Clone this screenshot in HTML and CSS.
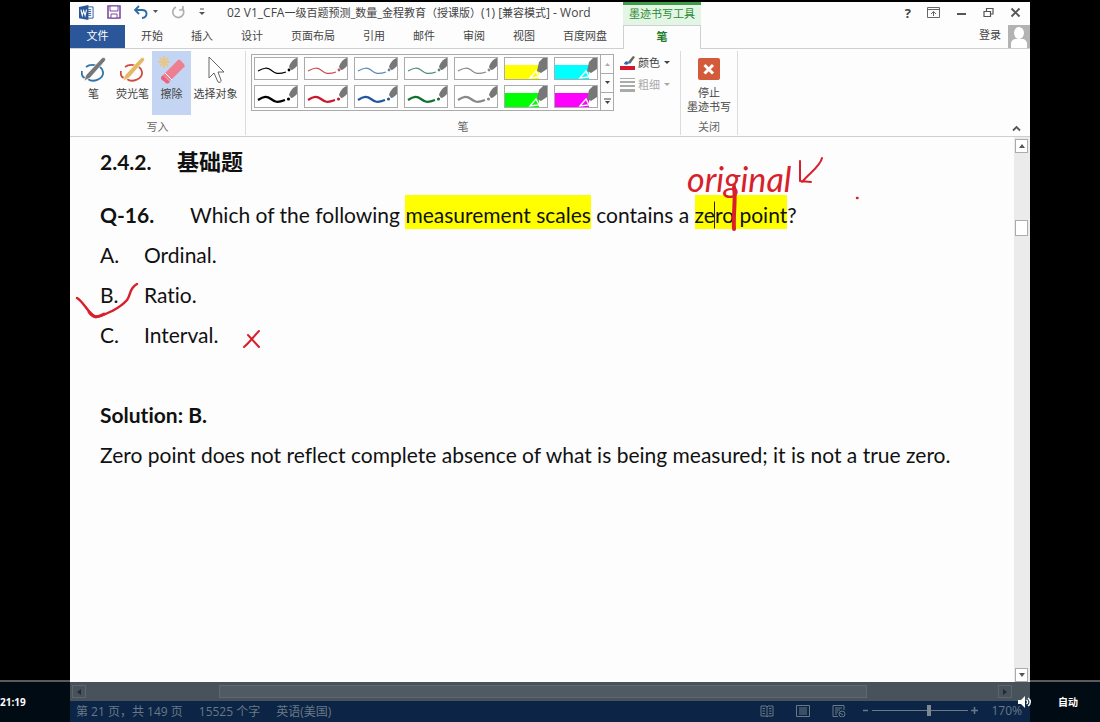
FILE: index.html
```
<!DOCTYPE html>
<html lang="zh-CN">
<head>
  <meta charset="UTF-8">
  <meta name="viewport" content="width=device-width, initial-scale=1.0">
  <title>02 V1_CFA一级百题预测 - Word</title>
  <link rel="stylesheet" href="styles.css">
</head>
<body>
  <!-- shared icons -->
  <svg class="defs" aria-hidden="true">
    <symbol id="stroke-thin" viewBox="0 0 42 21">
      <path d="M3 13C9 10 12 9 16 12S22 17 31 14" fill="none" stroke="currentColor" stroke-width="1.2"/>
      <circle cx="34" cy="12" r="1.4" fill="currentColor"/>
      <path d="M36 12L34 9C35 5 38 1 42 0V8C40 10 38 12 36 12Z" fill="#777"/>
    </symbol>
    <symbol id="stroke-thick" viewBox="0 0 42 21">
      <path d="M3 14C9 10 12 10 16 13S22 17 30 14" fill="none" stroke="currentColor" stroke-width="2.2"/>
      <circle cx="33.500" cy="13" r="1.6" fill="currentColor"/>
      <path d="M36 12L34 9C35 5 38 1 42 0V8C40 10 38 12 36 12Z" fill="#777"/>
    </symbol>
    <symbol id="marker" viewBox="0 0 42 21">
      <path d="M0 7H34V21H0Z" fill="currentColor"/>
      <path d="M25 20L31 13L34 19Z" fill="none" stroke="#fff" stroke-width="1.3"/>
      <path d="M32 13L34 4L38 0H42V11L36 15Z" fill="#777"/>
    </symbol>
    <symbol id="pen" viewBox="0 0 26 28">
      <path d="M5 11C10 7 21 9 22 16C23 23 12 27 7 23M1 15C0 20 3 23 5 21" fill="none" stroke="var(--ring)" stroke-width="1.8"/>
      <path d="M3 25L5 19L20 3C22 0 26 2 24 5L9 22Z" fill="var(--body)" stroke="#fff" stroke-width=".7"/>
    </symbol>
  </svg>

  <div class="player">
    <div class="side"></div>

    <div class="word">
      <header class="titlebar">
        <div class="title-left">
          <svg class="logo" viewBox="0 0 16 16"><path d="M8 2H15V14H8" fill="#fff" stroke="#2b579a"/><path d="M9 5H13M9 7H13M9 9H13M9 11H13" stroke="#2b579a"/><path d="M0 2L10 0V16L0 14Z" fill="#2b579a"/><path d="M2 5L3.500 11L5 6L6.500 11L8 5" fill="none" stroke="#fff" stroke-width="1.200"/></svg>
          <button class="quick" aria-label="保存"><svg width="14" height="14" viewBox="0 0 14 14"><path d="M1 1H13V13H1Z" fill="none" stroke="#7d4ba0" stroke-width="1.600"/><path d="M3 1H11V6H3ZM4 9H10V13H4Z" fill="#fff" stroke="#7d4ba0"/></svg></button>
          <button class="quick undo" aria-label="撤消"><svg width="24" height="14" viewBox="0 0 24 14"><path d="M5 1L1 5L5 9M1 5H8C14 5 14 12 8 13" fill="none" stroke="#2e6aa8" stroke-width="1.900"/><path d="M19 5H24L21.500 8Z" fill="#555"/></svg></button>
          <button class="quick" aria-label="重复"><svg width="14" height="14" viewBox="0 0 14 14"><path d="M5 2A5.500 5.500 0 1 0 11 3M8 5H12V1" fill="none" stroke="#b0b0b0" stroke-width="1.700"/></svg></button>
          <button class="quick" aria-label="自定义"><svg width="8" height="8" viewBox="0 0 8 8"><path d="M2 1H6" stroke="#555"/><path d="M1 4H7L4 7Z" fill="#555"/></svg></button>
          <span class="doc-name"><span class="latin">02 V1_CFA</span>一级百题预测_数量_金程教育（授课版）<span class="latin">(1) [</span>兼容模式<span class="latin">] - Word</span></span>
        </div>
        <div class="context-name">墨迹书写工具</div>
        <div class="window-buttons">
          <button aria-label="帮助">?</button>
          <button aria-label="功能区显示选项"><svg width="13" height="11" viewBox="0 0 13 11"><path d="M.5 .5H12.500V10.500H.5ZM.5 2.500H12.500M6.500 9V4.500M4 7L6.500 4.500L9 7" fill="none" stroke="#666"/></svg></button>
          <button aria-label="最小化"><svg width="11" height="11" viewBox="0 0 11 11"><path d="M1 7H10" stroke="#555" stroke-width="2"/></svg></button>
          <button aria-label="还原"><svg width="11" height="11" viewBox="0 0 11 11"><path d="M1 4.500H7.500V9.500H1ZM3.500 4V1.500H10V7H8" fill="none" stroke="#555" stroke-width="1.200"/></svg></button>
          <button aria-label="关闭"><svg width="11" height="11" viewBox="0 0 11 11"><path d="M1.500 1.500L9.500 9.500M9.500 1.500L1.500 9.500" stroke="#555" stroke-width="1.900"/></svg></button>
        </div>
      </header>

      <nav class="tabs">
        <div class="tab-list">
          <button class="tab file">文件</button>
          <button class="tab">开始</button>
          <button class="tab">插入</button>
          <button class="tab">设计</button>
          <button class="tab">页面布局</button>
          <button class="tab">引用</button>
          <button class="tab">邮件</button>
          <button class="tab">审阅</button>
          <button class="tab">视图</button>
          <button class="tab">百度网盘</button>
        </div>
        <button class="tab active">笔</button>
        <div class="account">
          <a href="#">登录</a>
          <svg width="22" height="23" viewBox="0 0 22 23"><path d="M0 0H22V23H0Z" fill="#b3b3b3"/><ellipse cx="11" cy="8" rx="5" ry="6" fill="#fff"/><path d="M3 23V19C3 15 6 14 8 14H14C17 14 19 16 19 19V23Z" fill="#fff"/></svg>
        </div>
      </nav>

      <section class="ribbon">
        <div class="group write">
          <div class="tools">
            <button class="tool"><svg class="pen-blue" width="26" height="28"><use href="#pen"/></svg>笔</button>
            <button class="tool"><svg class="pen-orange" width="26" height="28"><use href="#pen"/></svg>荧光笔</button>
            <button class="tool selected"><svg width="28" height="28" viewBox="0 0 28 28"><path d="M6 0V12M0 6H12M2 2L10 10M10 2L2 10" stroke="#e6c88a" stroke-width="2"/><path d="M5 19L19 5C21 3 22 4 23 5L26 8C27 10 27 11 25 12L12 25Z" fill="#ee7f91"/><path d="M5 19L12 26C10 28 8 28 7 26L4 24C2 22 3 21 5 19Z" fill="#e8637b"/><path d="M7 17L14 24" stroke="#fff"/></svg>擦除</button>
            <button class="tool wide"><svg width="18" height="28" viewBox="0 0 18 28"><path d="M2 1V22L7 17L11 26C12 27 15 26 14 24L11 16H17Z" fill="#fff" stroke="#666"/></svg>选择对象</button>
          </div>
          <div class="group-name">写入</div>
        </div>

        <div class="group pens">
          <div class="pen-area">
            <div class="gallery">
              <div class="swatches">
                <button class="swatch black" aria-label="黑色细笔"><svg><use href="#stroke-thin"/></svg></button>
                <button class="swatch red" aria-label="红色细笔"><svg><use href="#stroke-thin"/></svg></button>
                <button class="swatch blue" aria-label="蓝色细笔"><svg><use href="#stroke-thin"/></svg></button>
                <button class="swatch green" aria-label="绿色细笔"><svg><use href="#stroke-thin"/></svg></button>
                <button class="swatch gray" aria-label="灰色细笔"><svg><use href="#stroke-thin"/></svg></button>
                <button class="swatch yellow" aria-label="黄色荧光笔"><svg><use href="#marker"/></svg></button>
                <button class="swatch cyan" aria-label="青色荧光笔"><svg><use href="#marker"/></svg></button>
                <button class="swatch black" aria-label="黑色粗笔"><svg><use href="#stroke-thick"/></svg></button>
                <button class="swatch crimson" aria-label="红色粗笔"><svg><use href="#stroke-thick"/></svg></button>
                <button class="swatch navy" aria-label="蓝色粗笔"><svg><use href="#stroke-thick"/></svg></button>
                <button class="swatch forest" aria-label="绿色粗笔"><svg><use href="#stroke-thick"/></svg></button>
                <button class="swatch gray" aria-label="灰色粗笔"><svg><use href="#stroke-thick"/></svg></button>
                <button class="swatch lime" aria-label="绿色荧光笔"><svg><use href="#marker"/></svg></button>
                <button class="swatch magenta" aria-label="洋红荧光笔"><svg><use href="#marker"/></svg></button>
              </div>
              <div class="gallery-nav">
                <button aria-label="上一行"><svg width="7" height="7" viewBox="0 0 7 7"><path d="M1 5H6L3.500 2Z" fill="#aaa"/></svg></button>
                <button aria-label="下一行"><svg width="7" height="7" viewBox="0 0 7 7"><path d="M1 2H6L3.500 5Z" fill="#444"/></svg></button>
                <button aria-label="更多"><svg width="7" height="7" viewBox="0 0 7 7"><path d="M0 1H7" stroke="#444"/><path d="M1 3H6L3.500 6Z" fill="#444"/></svg></button>
              </div>
            </div>
            <div class="pen-options">
              <button><svg width="16" height="14" viewBox="0 0 16 14"><path d="M0 10H15V14H0Z" fill="#d3172e"/><path d="M4 8C5 4 8 5 9 7C8 9 6 9 4 8Z" fill="#2e6aa8"/><path d="M8 6L13 0L15 1L10 8Z" fill="#666"/></svg>颜色<i class="arrow"></i></button>
              <button disabled><svg width="16" height="14" viewBox="0 0 16 14"><path d="M0 .5H15" stroke="#aaa"/><path d="M0 4H15" stroke="#aaa" stroke-width="2"/><path d="M0 8H15" stroke="#aaa" stroke-width="2"/><path d="M0 12.500H15" stroke="#aaa" stroke-width="3"/></svg>粗细<i class="arrow"></i></button>
            </div>
          </div>
          <div class="group-name">笔</div>
        </div>

        <div class="group close">
          <button class="tool stop"><svg width="22" height="22" viewBox="0 0 22 22"><rect width="22" height="22" rx="2" fill="#d35a3a"/><path d="M6.500 7L15 15.500M15 7L6.500 15.500" stroke="#fff" stroke-width="3"/></svg><span>停止<br>墨迹书写</span></button>
          <div class="group-name">关闭</div>
        </div>
        <button class="collapse" aria-label="折叠功能区"><svg width="9" height="7" viewBox="0 0 9 7"><path d="M1 5.500L4.500 2L8 5.500" fill="none" stroke="#555" stroke-width="1.800"/></svg></button>
      </section>

      <main class="document">
        <article class="page">
          <h2><span class="num">2.4.2.</span>基础题</h2>
          <p class="question"><b>Q-16.</b><span>Which of the following <mark>measurement scales</mark> contains a <mark>zero point</mark>?</span></p>
          <p class="option"><span>A.</span>Ordinal.</p>
          <p class="option"><span>B.</span>Ratio.</p>
          <p class="option"><span>C.</span>Interval.</p>
          <p class="solution"><b>Solution: B.</b></p>
          <p>Zero point does not reflect complete absence of what is being measured; it is not a true zero.</p>
        </article>

        <!-- ink annotations on top of the page -->
        <span class="ink-note">original</span>
        <svg class="ink" width="800" height="220" viewBox="0 0 800 220" fill="none" stroke="#d8202b" stroke-linecap="round" stroke-linejoin="round">
          <path d="M7 161C14 165 19 178 26 180C36 178 50 171 57 163C61 158 59 151 67 147" stroke-width="2.500"/>
          <path d="M19 175C23 181 27 181 34 177" stroke-width="3"/>
          <path d="M178 198L189 210M189 194C184 199 180 205 174 210" stroke-width="2"/>
          <path d="M664 50C666 62 663 76 664 92" stroke-width="4"/>
          <path d="M752 21C750 30 739 36 732 45M730 24L730 44L741 45" stroke-width="2"/>
          <path d="M787 61H787.500" stroke-width="2.500"/>
          <path d="M644.500 65V91" stroke="#222" stroke-width="1"/>
        </svg>

        <div class="vscroll">
          <button aria-label="向上滚动"><svg width="8" height="6" viewBox="0 0 8 6"><path d="M1 5H7L4 1Z" fill="#555"/></svg></button>
          <span class="vthumb"></span>
          <button aria-label="向下滚动"><svg width="8" height="6" viewBox="0 0 8 6"><path d="M1 1H7L4 5Z" fill="#555"/></svg></button>
        </div>
      </main>

      <div class="hscroll">
        <button aria-label="向左滚动"><svg width="6" height="8" viewBox="0 0 6 8"><path d="M5 1V7L1 4Z" fill="#222b33"/></svg></button>
        <span class="hthumb"></span>
        <button aria-label="向右滚动"><svg width="6" height="8" viewBox="0 0 6 8"><path d="M1 1V7L5 4Z" fill="#222b33"/></svg></button>
      </div>

      <footer class="status">
        <span>第 21 页，共 149 页</span>
        <span>15525 个字</span>
        <span>英语(美国)</span>
        <div class="views">
          <button aria-label="阅读视图"><svg width="14" height="12" viewBox="0 0 14 12"><path d="M1 1H6L7 2L8 1H13V11H8L7 12L6 11H1ZM7 2V11M2.500 3.500H5M2.500 6H5M2.500 8.500H5M9 3.500H11.500M9 6H11.500M9 8.500H11.500" fill="none" stroke="currentColor"/></svg></button>
          <button aria-label="页面视图"><svg width="14" height="12" viewBox="0 0 14 12"><path d="M.5 .5H13.500V11.500H.5ZM3 3H11M3 5H11M3 7H11M3 9H11" fill="none" stroke="currentColor"/></svg></button>
          <button aria-label="Web 版式"><svg width="14" height="12" viewBox="0 0 14 12"><path d="M6 11.500H1V.5H12V5M3 3H10M3 5H8M3 7H6M3 9H5" fill="none" stroke="currentColor"/><circle cx="10" cy="9" r="3" fill="none" stroke="currentColor"/><path d="M8 8L11 10" stroke="currentColor"/></svg></button>
        </div>
        <div class="zoom">
          <button aria-label="缩小"><svg width="7" height="7" viewBox="0 0 7 7"><path d="M1 3.500H6" stroke="currentColor" stroke-width="1.500"/></svg></button>
          <input type="range" min="0" max="100" value="59" aria-label="显示比例">
          <button aria-label="放大"><svg width="7" height="7" viewBox="0 0 7 7"><path d="M0 3.500H7M3.500 0V7" stroke="currentColor" stroke-width="1.500"/></svg></button>
          <span class="percent">170%</span>
        </div>
      </footer>
    </div>

    <div class="side"></div>

    <div class="time">21:19</div>
    <div class="quality">
      <button class="volume" aria-label="音量"><svg width="14" height="12" viewBox="0 0 14 12"><path d="M0 4H3L7 0V12L3 8H0Z" fill="#fff"/><path d="M8.500 4C10 5 10 7 8.500 8M10 2C13 4 13 8 10 10" fill="none" stroke="#fff" stroke-width="1.500"/></svg></button>
      <button>自动</button>
    </div>
  </div>
</body>
</html>
```
FILE: styles.css
```
* {
  box-sizing: border-box;
}
body {
  margin: 0;
  background: #000;
  color: #444;
  font-family: "Open Sans", "Noto Sans CJK SC", sans-serif;
  font-size: 11px;
}
button {
  padding: 0;
  border: none;
  background: none;
  color: inherit;
  font: inherit;
  cursor: pointer;
}
svg {
  display: block;
  flex: none;
}
.defs {
  position: absolute;
  width: 0;
  height: 0;
}
.player {
  display: grid;
  grid-template-columns: 70px 1fr 70px;
  grid-template-rows: 1fr 42px;
  min-height: 100vh;
  padding-top: 2px;
}
.word {
  grid-column: 2;
  grid-row: 1 / 3;
  display: flex;
  flex-direction: column;
  background: #fdfdfd;
}

/* title bar and tabs */
.titlebar,
.tabs {
  display: grid;
  grid-template-columns: 553px 78px 1fr;
}
.titlebar {
  height: 23px;
}
.title-left {
  display: flex;
  align-items: center;
  padding: 0 0 3px 9px;
}
.logo {
  width: 15px;
  height: 15px;
  margin-right: 13px;
}
.quick {
  margin-right: 13px;
}
.quick:nth-of-type(4) {
  margin-right: 0;
}
.doc-name {
  margin-left: 21px;
  white-space: nowrap;
}
.latin {
  font-size: 12px;
}
.context-name {
  border-top: 3px solid #3f9c46;
  background: #e3f6e5;
  color: #2b8a34;
  line-height: 17px;
  text-align: center;
}
.window-buttons {
  display: flex;
  align-items: center;
  justify-content: flex-end;
  gap: 16px;
  padding: 0 9px 2px 0;
}
.window-buttons button:first-child {
  font-size: 13px;
  font-weight: bold;
}
.tabs {
  height: 24px;
}
.tab-list {
  display: flex;
  border-bottom: 1px solid #d0d0d0;
}
.tab {
  padding: 0 14px 3px;
  white-space: nowrap;
}
.tab.file {
  width: 55px;
  margin-right: 2px;
  background: #2b579a;
  color: #fff;
}
.tab.active {
  border: 1px solid #d0d0d0;
  border-bottom: none;
  color: #1e7a2a;
  font-weight: bold;
}
.account {
  display: flex;
  justify-content: flex-end;
  gap: 7px;
  border-bottom: 1px solid #d0d0d0;
}
.account a {
  color: #444;
  line-height: 20px;
  text-decoration: none;
}

/* ribbon */
.ribbon {
  display: flex;
  height: 88px;
  border-bottom: 1px solid #d0d0d0;
}
.group {
  display: flex;
  flex-direction: column;
  justify-content: space-between;
  margin: 2px 0 1px;
  border-right: 1px solid #dcdcdc;
}
.write {
  width: 176px;
}
.tools {
  display: flex;
  padding-left: 4px;
}
.tool {
  display: flex;
  flex-direction: column;
  align-items: center;
  gap: 3px;
  width: 39px;
  height: 64px;
  padding-top: 5px;
  line-height: 14px;
  white-space: nowrap;
}
.tool.wide {
  width: 49px;
}
.tool.selected {
  background: #c3d5f2;
}
.pen-blue {
  --ring: #2f75a8;
  --body: #777;
}
.pen-orange {
  --ring: #cf4d3b;
  --body: #e5b866;
}
.group-name {
  color: #666;
  line-height: 16px;
  text-align: center;
}
.pens {
  width: 435px;
}
.pen-area {
  display: flex;
  gap: 6px;
  padding: 3px 0 0 5px;
}
.gallery {
  display: flex;
  border: 1px solid #ababab;
}
.swatches {
  display: grid;
  grid-template-columns: repeat(7, 44px);
  gap: 5px 6px;
  padding: 2px;
}
.swatch {
  height: 23px;
  border: 1px solid #ababab;
  background: #fff;
}
.swatch svg {
  width: 42px;
  height: 21px;
}
.black { color: #000; }
.red { color: #c8505a; }
.blue { color: #5b86b8; }
.green { color: #4f8f72; }
.gray { color: #888; }
.crimson { color: #c8172b; }
.navy { color: #2456a0; }
.forest { color: #11702f; }
.yellow { color: #ff0; }
.cyan { color: #0ff; }
.lime { color: #0f0; }
.magenta { color: #f0f; }
.gallery-nav {
  display: grid;
  grid-template-rows: repeat(3, 1fr);
  width: 13px;
  border-left: 1px solid #ababab;
}
.gallery-nav button {
  display: grid;
  place-items: center;
}
.gallery-nav button + button {
  border-top: 1px solid #ababab;
}
.pen-options {
  display: flex;
  flex-direction: column;
  gap: 5px;
}
.pen-options button {
  display: flex;
  align-items: center;
  gap: 2px;
  line-height: 17px;
}
.pen-options button:disabled {
  color: #aaa;
}
.arrow {
  margin-left: 2px;
  border: 3px solid transparent;
  border-top-color: currentColor;
  border-bottom: none;
}
.close {
  width: 57px;
}
.tool.stop {
  gap: 6px;
  width: 56px;
  padding-top: 7px;
}
.collapse {
  margin: auto 9px 4px auto;
}

/* document */
.document {
  position: relative;
  display: flex;
  flex: 1;
  justify-content: space-between;
}
.page {
  padding: 5px 0 0 30px;
  color: #111;
  font-family: Lato, "Noto Sans CJK SC", sans-serif;
  font-size: 21px;
  font-variant-ligatures: none;
  line-height: 40px;
}
.page h2,
.page p {
  display: flex;
  margin: 0;
  white-space: nowrap;
}
.page h2 {
  margin-bottom: 13px;
  font-size: 22px;
}
.num {
  width: 77px;
  font-size: 21px;
}
.question b {
  width: 90px;
}
.question span {
  white-space: pre;
}
.page mark {
  padding: 7px 0 2px;
  background: #ff0;
  color: inherit;
}
.option span {
  width: 44px;
}
.page .solution {
  margin-top: 40px;
}
.ink {
  position: absolute;
  top: 0;
  left: 0;
}
.ink-note {
  position: absolute;
  top: 22px;
  left: 617px;
  color: #d8202b;
  font-family: Lato, sans-serif;
  font-size: 34px;
  font-style: italic;
  line-height: 40px;
}
.vscroll {
  display: flex;
  flex-direction: column;
  justify-content: space-between;
  width: 16px;
  padding: 2px 2px 0 1px;
  background: #ebebeb;
}
.vscroll button,
.vthumb {
  display: grid;
  place-items: center;
  height: 14px;
  border: 1px solid #ababab;
  background: #fff;
}
.vthumb {
  height: 16px;
  margin: 67px 0 auto;
}

/* bottom bars, dimmed by the player controls */
.hscroll {
  display: flex;
  height: 19px;
  padding: 3px 18px 3px 2px;
  background: #48525b;
}
.hscroll button {
  display: grid;
  place-items: center;
  width: 14px;
  border: 1px solid #5b656d;
}
.hthumb {
  flex: 1;
  margin: 0 131px 0 133px;
  border: 1px solid #5e6870;
  background: #505a63;
}
.status {
  display: flex;
  align-items: center;
  gap: 16px;
  height: 21px;
  padding: 0 8px 2px 6px;
  background: #0c2445;
  color: #697986;
  font-size: 12px;
  white-space: nowrap;
}
.views {
  display: flex;
  gap: 22px;
  margin-left: auto;
}
.zoom {
  display: flex;
  align-items: center;
  gap: 3px;
}
.zoom input {
  width: 96px;
  height: 11px;
  margin: 0;
  background: linear-gradient(#697986, #697986) center / 100% 1px no-repeat;
  appearance: none;
}
.zoom input::-webkit-slider-thumb {
  width: 4px;
  height: 11px;
  background: #7c8993;
  appearance: none;
}
.percent {
  margin-left: 10px;
}
.time,
.quality {
  grid-row: 2;
  border-top: 2px solid #5a5a5a;
  background: #010b14;
  color: #fff;
  font-size: 10px;
  font-weight: bold;
  line-height: 40px;
}
.time {
  grid-column: 1;
}
.quality {
  position: relative;
  grid-column: 3;
  padding-left: 28px;
}
.volume {
  position: absolute;
  top: 14px;
  left: -12px;
}
```
